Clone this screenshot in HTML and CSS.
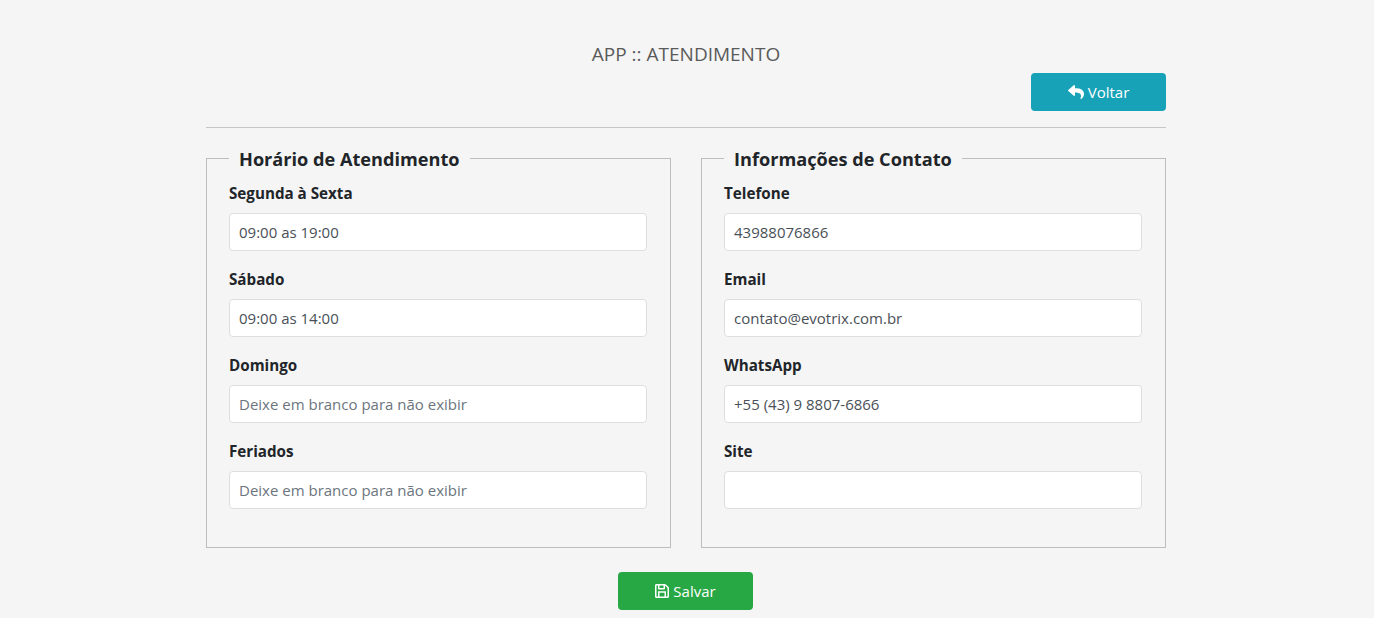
FILE: index.html
```html
<!DOCTYPE html>
<html lang="pt-BR">
<head>
<meta charset="utf-8">
<title>APP :: ATENDIMENTO</title>
<link rel="stylesheet" href="styles.css">
</head>
<body>
<main class="page">
  <h1 class="title">APP :: ATENDIMENTO</h1>
  <div class="actions">
    <button type="button" class="btn btn-info">
      <svg class="icon" viewBox="0 0 512 512" aria-hidden="true"><path fill="currentColor" d="M8.309 189.836L184.313 37.851C199.719 24.546 224 35.347 224 56.015v80.053c160.629 1.839 288 34.032 288 186.258 0 61.441-39.581 122.309-83.333 154.132-13.653 9.931-33.111-2.533-28.077-18.631 45.344-145.012-21.507-183.51-176.59-185.742V360c0 20.7-24.3 31.453-39.687 18.164l-176.004-152c-11.071-9.562-11.086-26.753 0-36.328z"/></svg>
      Voltar
    </button>
  </div>
  <hr class="rule">
  <form class="columns">
    <fieldset class="group">
      <legend class="group-title">Horário de Atendimento</legend>
      <div class="field"><label class="label">Segunda à Sexta</label><input class="input" value="09:00 as 19:00"></div>
      <div class="field"><label class="label">Sábado</label><input class="input" value="09:00 as 14:00"></div>
      <div class="field"><label class="label">Domingo</label><input class="input" placeholder="Deixe em branco para não exibir"></div>
      <div class="field"><label class="label">Feriados</label><input class="input" placeholder="Deixe em branco para não exibir"></div>
    </fieldset>
    <fieldset class="group">
      <legend class="group-title">Informações de Contato</legend>
      <div class="field"><label class="label">Telefone</label><input class="input" value="43988076866"></div>
      <div class="field"><label class="label">Email</label><input class="input" value="contato@evotrix.com.br"></div>
      <div class="field"><label class="label">WhatsApp</label><input class="input" value="+55 (43) 9 8807-6866"></div>
      <div class="field"><label class="label">Site</label><input class="input"></div>
    </fieldset>
  </form>
  <div class="footer">
    <button type="button" class="btn btn-success">
      <svg class="icon" viewBox="0 0 448 512" aria-hidden="true"><path fill="currentColor" d="M433.941 129.941l-83.882-83.882A48 48 0 0 0 316.118 32H48C21.49 32 0 53.49 0 80v352c0 26.51 21.49 48 48 48h352c26.51 0 48-21.49 48-48V163.882a48 48 0 0 0-14.059-33.941zM272 80v80H144V80h128zm122 352H54a6 6 0 0 1-6-6V86a6 6 0 0 1 6-6h42v104c0 13.255 10.745 24 24 24h176c13.255 0 24-10.745 24-24V83.882l78.243 78.243a6 6 0 0 1 1.757 4.243V426a6 6 0 0 1-6 6zM96 264h256v168h-48V312H144v120H96z"/></svg>
      Salvar
    </button>
  </div>
</main>
</body>
</html>
```
FILE: styles.css
```css
* { box-sizing: border-box; }
html, body { margin: 0; height: 618px; overflow: hidden; }
body {
  background: #f5f5f5;
  color: #212529;
  font-family: "Open Sans", "Noto Sans", sans-serif;
  font-size: 15px;
  line-height: 24px;
}
.page { width: 960px; margin-left: 206px; padding-top: 39px; }
.title {
  margin: 0 0 4px;
  font-size: 19px;
  line-height: 30px;
  font-weight: 400;
  text-align: center;
  color: #5a5a5a;
}
.actions { display: flex; justify-content: flex-end; }
.btn {
  display: inline-flex;
  align-items: center;
  justify-content: center;
  gap: 4px;
  width: 135px;
  height: 38px;
  padding: 0;
  border: 0;
  border-radius: 4px;
  color: #fff;
  font: inherit;
}
.btn-info { background: #17a2b8; }
.btn-success { background: #28a745; }
.icon { width: 16px; height: 16px; }
.btn-success .icon { width: 14px; height: 16px; }
.rule { margin: 16px 0 17px; border: 0; border-top: 1px solid #c6c6c6; }
.columns { display: grid; grid-template-columns: 465px 465px; gap: 30px; }
.group {
  margin: 0;
  min-width: 0;
  height: 403px;
  padding: 10px 23px 0 22px;
  border: 1px solid #bdbdbd;
}
.group-title {
  padding: 2px 10px 0;
  font-size: 18.15px;
  line-height: 24px;
  font-weight: 700;
  color: #212529;
}
.field { margin-bottom: 16px; }
.label { display: block; margin-bottom: 8px; font-weight: 700; font-size: 15.2px; }
.input {
  display: block;
  width: 100%;
  height: 38px;
  padding: 6px 9px;
  border: 1px solid #dcdfe2;
  border-radius: 4px;
  background: #fff;
  color: #495057;
  font: inherit;
}
.input::placeholder { color: #6c757d; opacity: 1; }
.footer { display: flex; justify-content: center; margin-top: 24px; padding-right: 1px; }
```
